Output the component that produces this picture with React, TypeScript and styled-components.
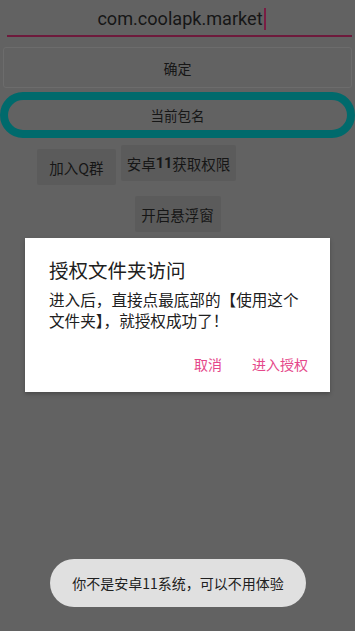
import React from "react";
import styled, { createGlobalStyle } from "styled-components";

const Global = createGlobalStyle`
  html, body { margin: 0; padding: 0; }
  body {
    width: 355px;
    height: 631px;
    overflow: hidden;
    background: #626262;
    font-family: Roboto, "Noto Sans CJK SC", sans-serif;
  }
`;

const Page = styled.div`
  position: relative;
  width: 355px;
  height: 631px;
  background: #626262;
  display: flex;
  flex-direction: column;
  box-sizing: border-box;
  padding-top: 3px;
`;

const InputWrap = styled.div`
  margin: 0 3px 0 7px;
  height: 32px;
  border-bottom: 2px solid #6e1a3c;
  display: flex;
  align-items: center;
  justify-content: center;
  padding-left: 4px;
`;

const InputText = styled.span`
  font-family: Roboto, "Noto Sans CJK SC", sans-serif;
  font-size: 18.1px;
  color: #161616;
  line-height: 24px;
`;

const Cursor = styled.span`
  display: inline-block;
  width: 2px;
  height: 22px;
  background: #7a1d44;
  margin-left: 1px;
`;

const WideButton = styled.div`
  margin: 10px 3px 0 3px;
  height: 41px;
  box-sizing: border-box;
  border: 1px solid #6c6c6c;
  border-radius: 3px;
  display: flex;
  align-items: center;
  justify-content: center;
  font-family: "Noto Sans CJK SC", sans-serif;
  font-size: 14px;
  color: #161616;
`;

const RingButton = styled.div`
  margin-top: 4px;
  height: 46px;
  box-sizing: border-box;
  border: 8px solid #006a6c;
  border-radius: 23px;
  display: flex;
  align-items: center;
  justify-content: center;
  font-family: "Noto Sans CJK SC", sans-serif;
  font-size: 13.5px;
  color: #161616;
`;

const Row = styled.div`
  display: flex;
  align-items: flex-start;
  gap: 5px;
  padding-left: 37px;
  margin-top: 7px;
`;

const CenterRow = styled.div`
  display: flex;
  justify-content: center;
  margin-top: 11px;
`;

const FlatButton = styled.div<{ $drop?: number; $w: number }>`
  width: ${(p) => p.$w}px;
  height: 36px;
  margin-top: ${(p) => p.$drop ?? 0}px;
  background: #5b5b5b;
  border-radius: 2px;
  display: flex;
  align-items: center;
  justify-content: center;
  font-family: "Noto Sans CJK SC", sans-serif;
  font-size: 14.5px;
  color: #161616;
  b { font-family: Roboto, sans-serif; font-weight: 700; }
`;

const Dialog = styled.div`
  position: absolute;
  left: 25px;
  top: 238px;
  width: 305px;
  height: 154px;
  background: #ffffff;
  box-shadow: 0 2px 4px rgba(0, 0, 0, 0.25);
  box-sizing: border-box;
  padding: 20px 22px 0 24px;
  display: flex;
  flex-direction: column;
  font-family: "Noto Sans CJK SC", sans-serif;
`;

const Title = styled.div`
  font-size: 19.5px;
  line-height: 24px;
  color: #202020;
`;

const Body = styled.div`
  margin-top: 7px;
  font-size: 15.6px;
  line-height: 21px;
  color: #202020;
`;

const Actions = styled.div`
  margin-top: 23px;
  display: flex;
  justify-content: flex-end;
  gap: 30px;
`;

const Action = styled.div`
  font-size: 14px;
  line-height: 20px;
  color: #e5478a;
`;

const Toast = styled.div`
  position: absolute;
  left: 50px;
  top: 559px;
  width: 256px;
  height: 48px;
  border-radius: 24px;
  background: #e0e0e0;
  display: flex;
  align-items: center;
  justify-content: center;
  font-family: "Noto Sans CJK SC", sans-serif;
  font-size: 14px;
  color: #202020;
`;

export default function App() {
  return (
    <>
      <Global />
      <Page>
        <InputWrap>
          <InputText>com.coolapk.market</InputText>
          <Cursor />
        </InputWrap>
        <WideButton>确定</WideButton>
        <RingButton>当前包名</RingButton>
        <Row>
          <FlatButton $w={79} $drop={4}>加入Q群</FlatButton>
          <FlatButton $w={115}>
            安卓<b>11</b>获取权限
          </FlatButton>
        </Row>
        <CenterRow>
          <FlatButton $w={86}>开启悬浮窗</FlatButton>
        </CenterRow>
        <Dialog>
          <Title>授权文件夹访问</Title>
          <Body>
            进入后，直接点最底部的【使用这个文件夹】，就授权成功了！
          </Body>
          <Actions>
            <Action>取消</Action>
            <Action>进入授权</Action>
          </Actions>
        </Dialog>
        <Toast>你不是安卓11系统，可以不用体验</Toast>
      </Page>
    </>
  );
}
